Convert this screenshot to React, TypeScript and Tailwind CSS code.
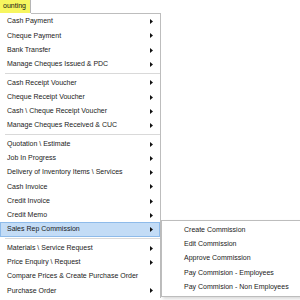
import React from 'react';

type Item = { label: string; arrow?: boolean; active?: boolean } | 'sep';

const MENU: Item[] = [
  { label: 'Cash Payment', arrow: true },
  { label: 'Cheque Payment', arrow: true },
  { label: 'Bank Transfer', arrow: true },
  { label: 'Manage Cheques Issued & PDC', arrow: true },
  'sep',
  { label: 'Cash Receipt Voucher', arrow: true },
  { label: 'Cheque Receipt Voucher', arrow: true },
  { label: 'Cash \\ Cheque Receipt Voucher', arrow: true },
  { label: 'Manage Cheques Received & CUC', arrow: true },
  'sep',
  { label: 'Quotation \\ Estimate', arrow: true },
  { label: 'Job In Progress', arrow: true },
  { label: 'Delivery of Inventory Items \\ Services', arrow: true },
  { label: 'Cash Invoice', arrow: true },
  { label: 'Credit Invoice', arrow: true },
  { label: 'Credit Memo', arrow: true },
  { label: 'Sales Rep Commission', arrow: true, active: true },
  'sep',
  { label: 'Materials \\ Service Request', arrow: true },
  { label: 'Price Enquiry \\ Request', arrow: true },
  { label: 'Compare Prices & Create Purchase Order' },
  { label: 'Purchase Order', arrow: true },
];

const SUBMENU = [
  'Create Commission',
  'Edit Commission',
  'Approve Commission',
  'Pay Commision - Employees',
  'Pay Commision - Non Employees',
];

function Arrow() {
  return (
    <svg width="3" height="5" viewBox="0 0 3 5" className="shrink-0">
      <polygon points="0,0 3,2.5 0,5" fill="#111" />
    </svg>
  );
}

export default function App() {
  return (
    <div
      className="relative h-[300px] w-[300px] overflow-hidden bg-white text-[7px] text-[#1a1a1a]"
      style={{ fontFamily: '"Liberation Sans", Arial, sans-serif' }}
    >
      <div className="flex h-[14px]">
        <div className="flex h-[13px] w-[31px] items-center justify-end border-r border-[#b5b5b5] bg-[#f7f65f] pr-[4px] text-[#111]">
          ounting
        </div>
        <div className="h-[14px] w-[130px] border-b border-[#bdbdbd]" />
      </div>

      <div className="w-[161px] border-r border-[#bdbdbd] bg-white pt-[0.6px]">
        {MENU.map((item, i) =>
          item === 'sep' ? (
            <div key={i} className="flex h-[4.2px] items-center pl-[5px]">
              <div className="h-px w-full bg-[#d9d9d9]" />
            </div>
          ) : (
            <div
              key={i}
              className={
                item.active
                  ? 'flex h-[14.25px] items-center justify-between border border-[#8ebbea] bg-[#c3dcf6] pl-[6px] pr-[6px]'
                  : 'flex h-[14.25px] items-center justify-between pl-[7px] pr-[7px]'
              }
            >
              <span className="whitespace-nowrap">{item.label}</span>
              {item.arrow ? <Arrow /> : null}
            </div>
          )
        )}
      </div>

      <div className="absolute left-[161px] top-[220px] w-[145px] border border-[#bdbdbd] bg-white py-[2px] shadow-[2px_2px_3px_rgba(0,0,0,0.15)]">
        {SUBMENU.map((label) => (
          <div key={label} className="flex h-[14.25px] items-center pl-[22px]">
            <span className="whitespace-nowrap">{label}</span>
          </div>
        ))}
      </div>
    </div>
  );
}
